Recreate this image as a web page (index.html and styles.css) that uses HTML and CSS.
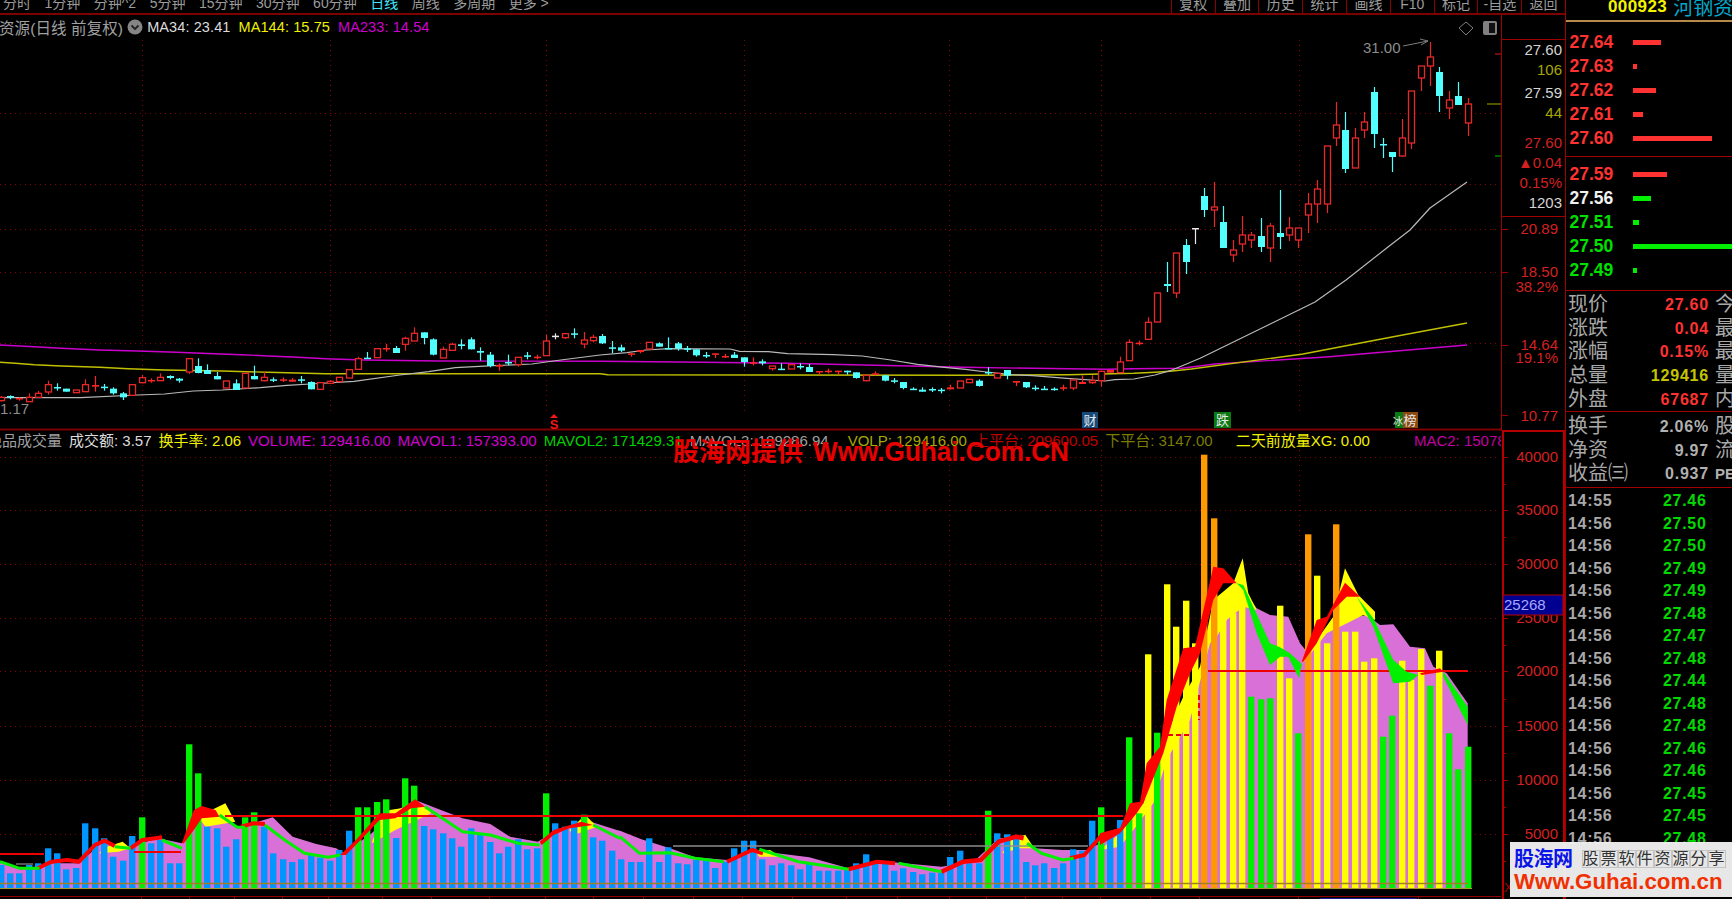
FILE: index.html
```html
<!DOCTYPE html>
<html lang="zh-CN">
<head>
<meta charset="utf-8">
<title>000923 河钢资源</title>
<link rel="stylesheet" href="styles.css">
</head>
<body>
<div class="app">
  <div class="left">
    <div class="toolbar">
      <div class="tabs">
        <span>分时</span><span>1分钟</span><span>分钟^2</span><span>5分钟</span><span>15分钟</span><span>30分钟</span><span>60分钟</span><span class="tab-on">日线</span><span>周线</span><span>多周期</span><span>更多 &gt;</span>
      </div>
      <div class="tools">
        <span class="tool">复权</span><span class="tool">叠加</span><span class="tool">历史</span><span class="tool">统计</span><span class="tool">画线</span><span class="tool">F10</span><span class="tool">标记</span><span class="tool">-自选</span><span class="tool">返回</span>
      </div>
    </div>
    <div class="panes">
      <div class="charts">
        <section class="pane pane-main">
          <svg class="plot" id="main-plot" viewBox="0 15 1501 416" width="1501" height="416">
            <g id="main-layer"></g>
            <g class="note">
              <text x="1363" y="53">31.00</text>
              <path class="note-line" d="M1403 46 L1428 41 M1420 39 L1428 41 L1421 45"/>
              <text x="0" y="414">1.17</text>
              <polygon class="note-line" points="1466,22 1473,28 1466,35 1459,28"/>
              <rect class="panel-icon" x="1483" y="21" width="14" height="14" rx="2"/>
              <rect class="panel-hole" x="1489" y="23" width="6" height="10"/>
            </g>
            <polygon class="sig-s" points="554,414 558,418 550,418"/>
            <text class="sig-s sig-text" x="554" y="429">S</text>
            <rect class="tag-blue" x="1082" y="412" width="16" height="16"/>
            <text class="tag-text" x="1090" y="425">财</text>
            <rect class="tag-green" x="1214" y="412" width="17" height="16"/>
            <text class="tag-text" x="1222.5" y="425">跌</text>
            <rect class="tag-green" x="1395" y="412" width="8" height="16"/>
            <rect class="tag-brown" x="1403" y="412" width="15" height="16"/>
            <text class="tag-text tag-small" x="1398" y="425">冰</text>
            <text class="tag-text" x="1410" y="425">榜</text>
          </svg>
          <div class="legend legend-top">
            <span class="l-grey title-clip">资源(日线 前复权)</span>
            <svg class="menu-dot" viewBox="0 0 16 16" width="16" height="16"><circle cx="8" cy="8" r="7.5"/><path d="M4.5 6.5 L8 10 L11.5 6.5"/></svg>
            <span class="l-white">MA34: 23.41</span>
            <span class="l-yellow">MA144: 15.75</span>
            <span class="l-magenta">MA233: 14.54</span>
          </div>
        </section>
        <section class="pane pane-vol">
          <svg class="plot" id="vol-plot" viewBox="0 431 1501 468" width="1501" height="468">
            <g id="vol-layer"></g>
          </svg>
          <div class="legend legend-vol">
            <span class="l-grey vol-clip">绝品成交量</span>
            <span class="l-white">成交额: 3.57</span>
            <span class="l-yellow">换手率: 2.06</span>
            <span class="l-magenta">VOLUME: 129416.00</span>
            <span class="l-magenta">MAVOL1: 157393.00</span>
            <span class="l-green">MAVOL2: 171429.31</span>
            <span class="l-grey">MAVOL3: 189286.94</span>
            <span class="l-olive gap-a">VOLP: 129416.00</span>
            <span class="l-red">上平台: 209600.05</span>
            <span class="l-dim">下平台: 3147.00</span>
            <span class="l-yellow gap-b">二天前放量XG: 0.00</span>
            <span class="l-plum gap-c">MAC2: 15078</span>
          </div>
          <div class="stamp">股海网提供 <b>Www.Guhai.Com.CN</b></div>
        </section>
      </div>
      <div class="axis">
        <svg viewBox="1501 15 64 884" width="64" height="884">
          <path class="ax-frame" d="M1501.5 15 V431 M1501 39.5 H1565 M1501 216.5 H1565"/>
          <path class="ax-vol" d="M1502 431 H1564 V899 M1503 431 V899"/>
          <path class="ax-frame" d="M1501 229 H1508 M1501 272 H1508 M1501 345 H1508 M1501 415 H1508"/>
          <path class="ax-frame" d="M1503 457 H1508 M1503 510 H1508 M1503 564 H1508 M1503 618 H1508 M1503 671 H1508 M1503 726 H1508 M1503 780 H1508 M1503 834 H1508 M1503 484 H1506 M1503 537 H1506 M1503 645 H1506 M1503 699 H1506 M1503 753 H1506 M1503 807 H1506 M1503 861 H1506"/>
          <g class="ax-num">
            <text class="t-white" x="1562" y="55">27.60</text>
            <text class="t-olive" x="1562" y="75">106</text>
            <text class="t-white" x="1562" y="98">27.59</text>
            <text class="t-olive" x="1562" y="118">44</text>
            <text x="1562" y="148">27.60</text>
            <text x="1562" y="168">▲0.04</text>
            <text x="1562" y="188">0.15%</text>
            <text class="t-white" x="1562" y="208">1203</text>
            <text x="1558" y="234">20.89</text>
            <text x="1558" y="277">18.50</text>
            <text x="1558" y="292">38.2%</text>
            <text x="1558" y="350">14.64</text>
            <text x="1558" y="363">19.1%</text>
            <text x="1558" y="421">10.77</text>
            <text x="1558" y="462">40000</text>
            <text x="1558" y="515">35000</text>
            <text x="1558" y="569">30000</text>
            <text x="1558" y="623">25000</text>
            <text x="1558" y="676">20000</text>
            <text x="1558" y="731">15000</text>
            <text x="1558" y="785">10000</text>
            <text x="1558" y="839">5000</text>
          </g>
          <rect class="cross-box" x="1503" y="595" width="60" height="20"/>
          <text class="cross-num" x="1504" y="610">25268</text>
          <text class="ax-x" x="1504" y="892">X</text>
        </svg>
      </div>
    </div>
  </div>

  <aside class="side">
    <div class="sym"><b class="sym-code">000923</b><span class="sym-name">河钢资源</span></div>
    <div class="book book-ask">
      <div class="lvl"><b class="up">27.64</b><i class="bar-up" style="width:28px"></i></div>
      <div class="lvl"><b class="up">27.63</b><i class="bar-up" style="width:4px"></i></div>
      <div class="lvl"><b class="up">27.62</b><i class="bar-up" style="width:23px"></i></div>
      <div class="lvl"><b class="up">27.61</b><i class="bar-up" style="width:10px"></i></div>
      <div class="lvl"><b class="up">27.60</b><i class="bar-up" style="width:79px"></i></div>
    </div>
    <div class="book book-bid">
      <div class="lvl"><b class="up">27.59</b><i class="bar-up" style="width:34px"></i></div>
      <div class="lvl"><b class="flat">27.56</b><i class="bar-dn" style="width:18px"></i></div>
      <div class="lvl"><b class="dn">27.51</b><i class="bar-dn" style="width:6px"></i></div>
      <div class="lvl"><b class="dn">27.50</b><i class="bar-dn" style="width:110px"></i></div>
      <div class="lvl"><b class="dn">27.49</b><i class="bar-dn" style="width:4px"></i></div>
    </div>
    <div class="stats stats-a">
      <div class="stat"><span>现价</span><b class="up">27.60</b><span class="trail">今</span></div>
      <div class="stat"><span>涨跌</span><b class="up">0.04</b><span class="trail">最</span></div>
      <div class="stat"><span>涨幅</span><b class="up">0.15%</b><span class="trail">最</span></div>
      <div class="stat"><span>总量</span><b class="vol">129416</b><span class="trail">量</span></div>
      <div class="stat"><span>外盘</span><b class="up">67687</b><span class="trail">内</span></div>
    </div>
    <div class="stats stats-b">
      <div class="stat"><span>换手</span><b>2.06%</b><span class="trail">股</span></div>
      <div class="stat"><span>净资</span><b>9.97</b><span class="trail">流</span></div>
      <div class="stat"><span>收益㈢</span><b>0.937</b><span class="trail trail-pe">PE</span></div>
    </div>
    <div class="trades">
      <div class="trade"><b>14:55</b><b class="dn2">27.46</b></div>
      <div class="trade"><b>14:56</b><b class="dn2">27.50</b></div>
      <div class="trade"><b>14:56</b><b class="dn2">27.50</b></div>
      <div class="trade"><b>14:56</b><b class="dn2">27.49</b></div>
      <div class="trade"><b>14:56</b><b class="dn2">27.49</b></div>
      <div class="trade"><b>14:56</b><b class="dn2">27.48</b></div>
      <div class="trade"><b>14:56</b><b class="dn2">27.47</b></div>
      <div class="trade"><b>14:56</b><b class="dn2">27.48</b></div>
      <div class="trade"><b>14:56</b><b class="dn2">27.44</b></div>
      <div class="trade"><b>14:56</b><b class="dn2">27.48</b></div>
      <div class="trade"><b>14:56</b><b class="dn2">27.48</b></div>
      <div class="trade"><b>14:56</b><b class="dn2">27.46</b></div>
      <div class="trade"><b>14:56</b><b class="dn2">27.46</b></div>
      <div class="trade"><b>14:56</b><b class="dn2">27.45</b></div>
      <div class="trade"><b>14:56</b><b class="dn2">27.45</b></div>
      <div class="trade"><b>14:56</b><b class="dn2">27.48</b></div>
    </div>
  </aside>

  <div class="logo">
    <div class="logo-top">
      <b class="logo-name">股海网</b>
      <span class="logo-cells"><span>股</span><span>票</span><span>软</span><span>件</span><span>资</span><span>源</span><span>分</span><span>享</span></span>
    </div>
    <div class="logo-url">Www.Guhai.com.cn</div>
  </div>
</div>
<script src="chart.js"></script>
</body>
</html>
```
FILE: styles.css
```css
* { box-sizing: border-box; }
html, body { margin: 0; height: 100%; background: #000; }
.app {
  position: relative;
  display: flex;
  width: 1732px;
  height: 899px;
  overflow: hidden;
  background: #000;
  color: #a8a8a8;
  font-family: "Liberation Sans", "Noto Sans CJK SC", sans-serif;
}
.left { display: flex; flex-direction: column; width: 1565px; }

/* toolbar */
.toolbar {
  display: flex;
  justify-content: space-between;
  flex: none;
  height: 15px;
  overflow: hidden;
  border-bottom: 2px solid #7c0000;
  font-size: 14px;
  color: #9c9c9c;
  white-space: nowrap;
}
.tabs { display: flex; gap: 13.5px; padding-left: 3px; margin-top: -7px; line-height: 20px; }
.tab-on { color: #3fe6ff; }
.tools { display: flex; }
.tool {
  width: 43.8px;
  height: 26px;
  margin-top: -6px;
  border-left: 1px solid #8c0000;
  text-align: center;
  line-height: 20px;
}

.panes { display: flex; flex: 1; min-height: 0; }
.charts { display: flex; flex-direction: column; width: 1501px; }
.pane { position: relative; overflow: hidden; }
.pane-main { flex: none; height: 416px; }
.pane-vol { flex: 1; }
.plot { position: absolute; left: 0; top: 0; display: block; }

/* legends */
.legend {
  position: relative;
  display: flex;
  align-items: center;
  white-space: nowrap;
}
.legend-top { gap: 8px; height: 22px; margin-top: 1px; font-size: 14.5px; letter-spacing: .1px; }
.legend-vol { gap: 7px; height: 18px; margin-top: 1px; font-size: 15px; line-height: 18px; }
.title-clip { margin-left: -1px; margin-right: -4px; font-size: 15.5px; }
.menu-dot { margin-right: -4px; }
.vol-clip { margin-left: -13px; }
.gap-a { margin-left: 12px; }
.gap-b { margin-left: 16px; }
.gap-c { margin-left: 37px; }
.l-grey { color: #a0a0a0; }
.l-white { color: #dcdcdc; }
.l-yellow { color: #f0f000; }
.l-magenta { color: #d000d0; }
.l-green { color: #00d000; }
.l-olive { color: #a8a800; }
.l-red { color: #c00000; }
.l-dim { color: #7c7c00; }
.l-plum { color: #c000a0; }
.menu-dot circle { fill: #858585; }
.menu-dot path { fill: none; stroke: #222; stroke-width: 1.8; }

.stamp {
  position: absolute;
  left: 673px;
  top: 3px;
  font-size: 26px;
  line-height: 36px;
  font-weight: 700;
  color: #e60000;
  white-space: nowrap;
}
.stamp b {
  display: inline-block;
  margin-left: 3px;
  font-size: 27.5px;
  transform: scaleX(.95);
  transform-origin: left center;
}

/* svg chart text */
.note text { fill: #8c8c8c; font-size: 15px; }
.note-line { fill: none; stroke: #7c7c7c; stroke-width: 1; }
.panel-icon { fill: #808080; }
.panel-hole { fill: #111; }
.sig-s { fill: #f01818; }
.sig-text { font-size: 13px; font-weight: 700; text-anchor: middle; }
.tag-blue { fill: #154a7c; }
.tag-green { fill: #0a7a12; }
.tag-brown { fill: #8a4a12; }
.tag-text { fill: #e8e8e8; font-size: 13px; text-anchor: middle; }
.tag-small { font-size: 10px; }

/* axis */
.axis { width: 64px; flex: none; }
.axis svg { display: block; }
.ax-frame { fill: none; stroke: #a00000; stroke-width: 1; shape-rendering: crispEdges; }
.ax-vol { fill: none; stroke: #b40000; stroke-width: 2; shape-rendering: crispEdges; }
.ax-num text { fill: #d42020; font-size: 15px; text-anchor: end; }
.ax-num .t-white { fill: #d4d4d4; }
.ax-num .t-olive { fill: #a8a800; }
.cross-box { fill: #000090; stroke: #b40000; stroke-width: 1; }
.cross-num { fill: #a8a8ff; font-size: 15px; }
.ax-x { fill: #a00000; font-size: 13px; }

/* right panel */
.side {
  display: flex;
  flex-direction: column;
  flex: none;
  width: 167px;
  overflow: hidden;
  border-left: 1px solid #a00000;
  font-size: 20px;
  white-space: nowrap;
}
.sym {
  display: flex;
  align-items: center;
  flex: none;
  height: 22px;
  padding: 0 0 7px 42px;
  border-bottom: 2px solid #b88a4a;
}
.sym-code { color: #f4f400; font-size: 17px; letter-spacing: .4px; }
.sym-name { margin-left: 6px; color: #00a8cc; font-size: 20px; }

.book { flex: none; border-bottom: 1px solid #a00000; }
.book-ask { height: 135px; padding-top: 9px; }
.book-bid { height: 134px; padding-top: 6px; }
.lvl { display: flex; align-items: center; height: 23.8px; padding-left: 3.5px; overflow: hidden; }
.lvl b { width: 63.5px; flex: none; font-size: 17.5px; }
.lvl i { display: block; flex: none; height: 5px; }
.up { color: #ff3232; }
.flat { color: #f0f0f0; }
.dn { color: #00e000; }
.vol { color: #c4c400; }
.bar-up { background: #ff3232; }
.bar-dn { background: #00f000; }

.stats { flex: none; border-bottom: 1px solid #a00000; padding-left: 2px; }
.stats-a { height: 121px; padding-top: 2px; }
.stats-b { height: 76px; padding-top: 3px; }
.stat {
  display: grid;
  grid-template-columns: 1fr auto 23px;
  align-items: center;
  height: 23.7px;
  line-height: 23.7px;
}
.stat b { font-size: 16px; letter-spacing: .8px; font-weight: 700; text-align: right; }
.stats-b .stat b { color: #b0b0b0; }
.trail { margin-left: 6px; }
.trail-pe { font-size: 15px; font-weight: 700; color: #b0b0b0; }

.trades { flex: 1; padding: 2px 0 0 2px; }
.trade {
  display: grid;
  grid-template-columns: 95px auto;
  align-items: center;
  height: 22.5px;
  font-size: 16px;
  letter-spacing: .7px;
}
.trade b { color: #a8a8a8; }
.trade .dn2 { color: #00d800; }

/* watermark logo */
.logo {
  position: absolute;
  right: 0;
  bottom: 2px;
  width: 222px;
  height: 55px;
  padding: 6px 4px 0 4px;
  background: rgba(240, 240, 240, .96);
}
.logo-top { display: flex; align-items: center; height: 22px; gap: 9px; }
.logo-name { color: #0a14e8; font-size: 20px; letter-spacing: -.5px; line-height: 22px; }
.logo-cells { display: flex; }
.logo-cells span {
  width: 18px;
  height: 18px;
  border: 1px solid #c4c4c4;
  color: #333;
  font-size: 16px;
  line-height: 16px;
  text-align: center;
}
.logo-url {
  color: #f03000;
  font-size: 22.3px;
  line-height: 24px;
  font-weight: 700;
  white-space: nowrap;
}
```
FILE: chart.js
```js
// Daily candles, volume bars and overlays. Prices and volumes are stored as
// pixel rows of the plot; series are indexed by k, bars counted back from the latest.
const SLOT = 9.405, LAST = 1467.7;
const slotX = k => Math.round(LAST - SLOT * k);

const scaled = (ox, oy, sx, sy = 3) => arr => {
  const out = [];
  for (let i = 0; i < arr.length; i += 2) {
    out.push((ox + arr[i] / sx).toFixed(1) + ',' + (oy + arr[i + 1] / sy).toFixed(1));
  }
  return out;
};
const seg9 = scaled(0, 310, 2.613), seg10 = scaled(600, 310, 2.613);
const seg7 = scaled(0, 720, 2.529), seg8 = scaled(620, 720, 2.8), seg4 = scaled(1100, 440, 3);
const seg0 = scaled(0, 0, 1, 1);

const line = (pts, color, w) => `<polyline points="${pts.join(' ')}" fill="none" stroke="${color}" stroke-width="${w}" stroke-linejoin="round"/>`;
const area = (pts, color) => `<polygon points="${pts.join(' ')}" fill="${color}"/>`;
const dotted = (d) => `<path d="${d}" fill="none" stroke="#860000" stroke-width="1" stroke-dasharray="1 4" shape-rendering="crispEdges"/>`;

/* ---------- main pane ---------- */
const GRID_X = [142, 330, 546, 744, 949, 1101, 1299];
const early = [
 [258,262,272,274,'r'],[256,258,262,268,'c'],[262,264,266,272,'R'],[250,262,275,276,'r'],[243,250,262,264,'r'],
 [212,224,246,254,'r'],[220,231,234,242,'c'],[236,236,245,245,'c'],[240,240,248,248,'r'],[208,224,245,246,'r'],
 [198,225,230,245,'R'],[222,230,233,242,'c'],[232,236,250,254,'c'],[246,250,262,270,'c'],[224,224,256,258,'r'],
 [195,203,218,220,'r'],[205,210,212,218,'R'],[190,202,212,212,'r'],[196,198,204,208,'c'],[204,206,212,218,'c'],
 [146,146,186,192,'r'],[145,168,189,190,'c'],[163,180,192,192,'c'],[186,198,208,208,'c'],[213,213,234,234,'r'],
 [208,220,240,240,'c'],[190,190,234,234,'r'],[167,198,208,208,'c'],[186,202,212,214,'r'],[202,208,210,216,'c'],
 [202,208,210,216,'R'],[204,209,215,215,'R'],[198,208,210,220,'c'],[214,216,238,238,'c'],[218,218,238,238,'r'],
 [210,214,220,220,'r'],[202,202,215,215,'r'],[179,179,204,204,'r'],[140,146,178,178,'r'],[126,143,145,145,'c'],
 [116,116,143,143,'r'],[102,114,116,125,'R'],[108,114,129,129,'c'],[80,85,103,122,'r'],[52,70,93,93,'r'],
 [67,67,84,103,'c'],[85,88,134,136,'c'],[110,118,144,144,'r'],[98,103,121,121,'r'],[88,103,108,118,'c'],
 [82,88,118,118,'c'],[112,123,128,152,'c'],[126,134,168,172,'c'],[160,165,170,182,'R'],[134,156,160,166,'c'],
 [142,142,164,170,'r'],[126,136,140,148,'c'],[134,140,143,148,'R'],[73,93,137,137,'r'],[70,77,79,88,'w'],
 [71,71,83,87,'r'],[55,70,74,85,'c'],[66,90,102,115,'r'],[74,82,92,97,'r'],
 [72,78,100,102,'c'],[93,112,114,130,'c'],[104,112,122,126,'c'],[130,130,132,140,'R'],[120,120,126,130,'R'],
 [97,97,117,117,'r'],[97,100,110,110,'c'],[82,114,116,116,'c'],[96,100,116,122,'c'],[108,115,117,126,'c'],
 [118,118,136,140,'c'],[126,135,137,144,'c'],[130,130,134,144,'R'],[132,138,140,144,'R'],[126,134,144,144,'c'],
 [142,142,156,170,'c'],[142,157,159,166,'R'],[148,154,160,166,'c'],[168,168,176,182,'r'],[160,176,178,178,'c'],
 [164,164,177,177,'r'],[160,168,170,178,'c'],[162,171,186,186,'c'],[183,183,187,194,'R'],[176,182,184,190,'R'],
 [182,182,184,194,'R'],[182,182,187,194,'c'],[187,187,204,206,'c'],[196,196,212,214,'r'],[184,190,194,196,'R'],
 [196,196,212,214,'c'],[204,211,213,220,'c'],[216,216,234,238,'c'],[232,236,239,239,'c'],[232,239,245,245,'c'],
 [232,237,239,246,'c'],[234,239,241,250,'c'],[224,232,238,238,'R'],[213,213,234,234,'r'],[208,208,218,218,'r'],
 [208,212,228,230,'c'],[172,186,188,195,'c'],[190,190,204,204,'r'],[180,180,197,208,'c'],[213,213,218,228,'R'],
 [216,216,232,234,'c'],[226,233,235,242,'c'],[228,236,240,240,'c'],[232,236,238,242,'c'],[224,232,235,242,'R'],
 [210,210,234,240,'r'],[196,216,222,222,'R'],[196,212,218,222,'r'],[184,184,212,230,'r'],[180,180,188,188,'R'],
 [140,156,188,188,'r'],[88,97,152,152,'r'],[92,98,100,106,'R'],[22,37,88,88,'r'],[-52,-51,36,36,'r']
].map(([a,b,c,d,t]) => [310+a/3, 310+b/3, 310+c/3, 310+d/3, t]);
const late = [
 [262,284,286,292,'c'],[253,253,293,298,'r'],[239,245,262,274,'c'],[228,228,229,244,'w'],[188,196,210,217,'c'],
 [182,207,210,227,'r'],[206,222,248,248,'c'],[240,250,255,262,'r'],[216,235,244,252,'r'],[232,235,240,248,'r'],
 [218,236,247,252,'c'],[223,226,248,262,'r'],[190,233,237,249,'c'],[217,228,235,241,'r'],[228,228,240,248,'r'],
 [193,204,215,233,'r'],[180,189,204,223,'r'],[146,146,204,213,'r'],[102,125,138,146,'r'],[112,130,169,173,'c'],
 [128,138,168,168,'r'],[112,122,130,138,'r'],[87,92,134,148,'c'],[138,144,145,158,'c'],[152,152,157,172,'c'],
 [119,138,156,157,'r'],[91,91,143,149,'r'],[66,66,78,91,'r'],[42,57,66,86,'r'],[67,72,96,112,'c'],
 [91,100,108,119,'r'],[82,96,105,105,'c'],[98,104,123,136,'r']
];
const candles = early.concat(late);
const COLORS = { r: '#e82828', R: '#ff2424', c: '#52ffff', w: '#e8e8e8' };

function candleSvg(c, i) {
  const k = candles.length - 1 - i, x = slotX(k) + .5;
  const [wt, bt, bb, wb, t] = c, col = COLORS[t];
  const wick = `<path d="M${x} ${wt}V${wb}" stroke="${col}" stroke-width="1.2"/>`;
  if (t === 'r') {
    return wick + `<rect x="${x-3}" y="${bt}" width="6" height="${bb-bt}" fill="#000" stroke="${col}" stroke-width="1.3"/>`;
  }
  return wick + `<rect x="${x-3.5}" y="${bt}" width="7" height="${Math.max(bb-bt,1.5)}" fill="${col}"/>`;
}

const magenta = seg9([0,105,90,110,160,115,260,120,360,123,460,127,560,131,630,134,700,138,780,142,850,146,950,150,1145,153,1568,154])
  .concat(seg10([270,157,490,160,690,165,810,168,950,172,1130,175,1320,178,1395,176,1520,175]), seg0([1215,364,1326,357,1467,345]));
const olive = seg9([0,157,40,160,90,164,160,168,260,172,335,176,430,180,580,183,700,187,850,191,1568,191])
  .concat(seg10([20,194,980,196,1225,194,1395,190,1450,187,1490,184,1545,177]), seg0([1303,354,1392,337,1467,323]));
const white = seg9([0,263,210,263,360,255,430,252,505,243,580,240,680,233,750,226,810,222,925,214,1045,195,1120,185,1190,173,1290,167,1390,162,1465,150,1568,135])
  .concat(seg10([70,128,120,120,180,116,340,117,365,124,440,125,490,131,610,134,685,138,760,150,830,163,900,172,955,178,1010,186,1075,194,1130,197,1220,205,1320,213,1345,209,1395,207,1450,195,1490,182,1520,168,1568,145]),
    seg0([1215,351,1315,302,1346,280,1388,247,1410,230,1430,208,1467,182]));

let mainSvg = '';
mainSvg += dotted(GRID_X.map(x => `M${x}.5 40V412`).join(''));
mainSvg += dotted([113,184,229,272,343].map(y => `M0 ${y}.5H1500`).join(''));
mainSvg += '<path d="M1495 54H1501" stroke="#d02020"/><path d="M1487 104H1501" stroke="#a8a800"/><path d="M1495 156H1501" stroke="#00c000"/>';
mainSvg += line(magenta, '#cc00cc', 1.4) + line(olive, '#c0c000', 1.4) + line(white, '#b8b8b8', 1.2);
mainSvg += candles.map(candleSvg).join('');
mainSvg += '<path d="M0 429.5H1501" stroke="#7c0000" stroke-width="2"/>';
document.getElementById('main-layer').innerHTML = mainSvg;

/* ---------- volume pane ---------- */
const BASE = 888;
const barsA = 'b435 b460 b460 b435 b430 b385 b400 b448 b444 b310 b325 b355 b410 b422 b348 g292 b370 b360 b430 b430 g73 g160 b320 b325 b380 b358 g292 g277 b320 b400 b418 b426 b418 b405 b413 b422 b390 b332 g262 g262 g246 g238 b354 g175 g197 b318 b328 b340 b355 b380 b325 b345 b366 b400 b380 b358 b388 b385 g220 b310 b320 b302 g284 b352 b362 b392'
  + ' b418 b426 b426 b355 b426 b382 b430 b433 b420 b420 b444 b425 b385 b362 b362 b418 b436 b430 b436 b448 b430 b452 b452 b452 b448 b430 b403 b425 b432 b452 b445 b456 b463 b458 b458 b411 b392 b430 b430 g272 b340 b343 b352 b426 b436 b430 b444 b430 b388 b392 b302 g262';
const barsB = 'b1190 b1140 g892 g1120 y643 g878 y433 y560 y482 y610 o44 o235 y540 y520 y490 g770 g778 g775 y497 y715 g880 o283 y407 y610 o253 y575 y575 y665 y655 g890 g827 y662 y720 y627 g737 y632 g880 g988 g920';
const BAR_COLORS = { b: '#0096ff', g: '#00f000', y: '#ffff00', o: '#ff9900' };
const bars = barsA.split(' ').map(t => [t[0], 720 + t.slice(1) / 3])
  .concat(barsB.split(' ').map(t => [t[0], 440 + t.slice(1) / 3]));

const pink = ['0,888'].concat(
  seg7([0,425,50,448,100,445,130,430,200,430,260,365,300,385,340,375,400,355,460,370,480,330,510,290,560,300,600,320,640,310,690,292,740,350,800,372,850,385,870,400,940,340,990,280,1050,240,1110,268,1170,295,1240,312,1290,350,1360,365,1400,335,1480,300,1560,330]),
  seg8([0,332,60,358,140,385,210,412,300,420,380,392,440,400,530,412,640,445,720,422,780,428,900,440,990,425,1060,355,1130,350,1160,385,1240,390,1310,390,1400,335]),
  seg4([60,1180,100,1130,160,1080,200,950,240,880,270,830,330,600,350,580,380,530,410,490,430,450,470,505,510,525,565,530,600,610,625,640,680,570,750,535,800,525,840,555,880,553,930,620,975,625,1000,680,1040,700,1103,790,1103,1345]));

const yellowAreas = [
  seg4([0,1230,60,1180,100,1120,130,1090,200,880,250,770,300,680,340,480,400,430,428,355,445,460,470,510,430,500,380,540,350,590,330,610,270,840,240,890,200,960,160,1090,100,1170,60,1220]),
  seg4([605,670,650,600,700,530,735,385,775,465,825,515,825,540,790,525,750,545,680,580,625,650]),
  seg8([1100,352,1135,345,1160,385,1120,385,1070,400]),
  seg8([380,395,420,390,450,410,390,410]),
  seg7([500,290,570,250,595,305,520,320]),
  seg7([270,380,310,365,330,385,300,395,250,400]),
  seg7([960,300,985,270,1040,260,1080,262,1090,280,1000,330,940,370]),
  seg7([1440,330,1480,285,1510,320,1450,345])
];
const redAreas = [
  seg4([0,1180,60,1165,90,1090,120,1085,140,970,180,920,200,780,250,625,285,620,340,380,370,385,410,430,370,430,340,480,300,640,270,700,230,800,190,940,130,1090,110,1120,60,1180,0,1215]),
  seg4([605,665,650,540,680,530,735,428,780,470,740,470,700,510,650,610,610,665]),
  seg4([960,700,1020,685,1030,695,965,705]),
  seg7([460,370,490,270,510,258,545,270,555,290,510,295,490,330,465,370]),
  seg7([860,405,900,360,960,280,1000,280,1050,238,1075,260,1040,265,1000,295,960,300,920,350,875,405]),
  seg7([1365,365,1400,330,1470,305,1500,315,1440,325,1400,345,1370,375])
];
const greenAreas = [
  seg4([410,430,430,435,510,610,540,622,570,640,605,672,597,715,565,650,540,650,510,675,470,580,430,450]),
  seg4([770,470,820,535,880,660,920,695,955,705,930,725,880,730,820,560,790,505]),
  seg4([1030,695,1103,800,1103,855,1030,710])
];
const redLines = [
  seg7([95,445,130,425,170,420,200,425,240,375,265,362,290,378]),
  seg7([330,385,360,360,410,352]),
  seg7([610,320,640,310,670,312]),
  seg8([300,425,370,390,400,400]),
  seg8([640,448,720,425,770,430]),
  seg8([1260,415,1300,405,1350,345,1400,330])
];
const redThick = [seg8([900,455,960,425,1010,420,1060,365,1110,350,1130,355])];
const greenLines = [
  seg7([0,425,50,445,100,445]), seg7([290,380,330,385]), seg7([410,360,460,385]), seg7([555,285,600,322,620,322]),
  seg7([670,315,720,360,770,400,830,412,860,405]), seg7([1075,260,1170,335,1240,345,1310,370,1365,375]),
  seg7([1500,315,1568,355]),
  seg8([0,350,55,400,140,398,210,415,290,425]), seg8([390,388,500,425,640,448]), seg8([780,430,900,455]),
  seg8([1140,370,1180,400,1240,420,1270,415])
];

let volSvg = '';
volSvg += dotted(GRID_X.map(x => `M${x}.5 440V${BASE}`).join(''));
volSvg += dotted([457,510,564,618,671,726,780,834].map(y => `M0 ${y}.5H1500`).join(''));
volSvg += area(pink, '#d870d8');
volSvg += yellowAreas.map(a => area(a, '#ffff00')).join('');
volSvg += bars.map((b, i) => {
  const k = bars.length - 1 - i, x = slotX(k);
  return `<rect x="${x-3}" y="${b[1].toFixed(1)}" width="6.4" height="${(BASE-b[1]).toFixed(1)}" fill="${BAR_COLORS[b[0]]}"/>`;
}).join('');
volSvg += '<path d="M0 883.5H1468" stroke="#a08020" stroke-width="1.5"/><path d="M0 888.5H1472" stroke="#a89830" stroke-width="1"/>';
volSvg += '<path d="M0 854H44M134 852H181M225 816H1123" stroke="#f00000" stroke-width="2"/>';
volSvg += '<path d="M1208 671H1468" stroke="#f00000" stroke-width="2"/><path d="M1168 735H1192" stroke="#f00000" stroke-width="2" stroke-dasharray="5 3"/><path d="M1199 695V720" stroke="#f00000" stroke-width="2" stroke-dasharray="5 3"/>';
volSvg += '<path d="M673 846H1088" stroke="#8c8c8c" stroke-width="1.5"/><path d="M16 864H33" stroke="#707070" stroke-width="1.5"/>';
volSvg += redAreas.map(a => area(a, '#ff0000')).join('');
volSvg += redLines.map(a => line(a, '#ff0000', 4)).join('');
volSvg += redThick.map(a => line(a, '#ff0000', 4.5)).join('');
volSvg += greenAreas.map(a => area(a, '#00f000')).join('');
volSvg += greenLines.map(a => line(a, '#00f000', 3)).join('');
volSvg += '<path d="M0 896.5H1501" stroke="#900000" stroke-width="1"/>';
const TICKS = [141,189,234,282,328,382,431,489,545,593,643,693,742,792,846,897,949,986,1025,1062,1100,1150,1199,1298,1418];
volSvg += `<path d="${TICKS.map(x => `M${x}.5 896V899`).join('')}" stroke="#900000"/>`;
volSvg += '<path d="M1320 898.5H1417" stroke="#1a1a90"/>';
document.getElementById('vol-layer').innerHTML = volSvg;
```
